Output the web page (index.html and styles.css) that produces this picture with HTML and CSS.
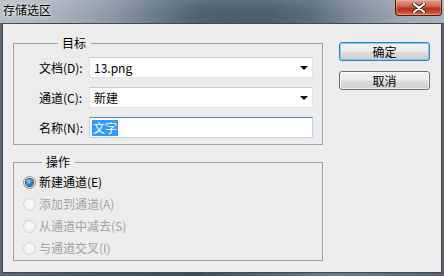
FILE: index.html
```html
<!DOCTYPE html>
<html>
<head>
<meta charset="utf-8">
<link rel="stylesheet" href="styles.css">
</head>
<body>
<div class="window">
  <div class="titlebar">
    <span class="title">存储选区</span>
    <button class="close" aria-label="关闭">
      <svg width="14" height="10" viewBox="0 0 14 10">
        <path d="M2 1 L12 9 M12 1 L2 9" stroke="#4a2420" stroke-width="4" stroke-linecap="round"/>
        <path d="M2 1 L12 9 M12 1 L2 9" stroke="#ffffff" stroke-width="2.2" stroke-linecap="round"/>
      </svg>
    </button>
  </div>
  <div class="client">
    <div class="groups">
      <fieldset class="group target">
        <legend>目标</legend>
        <div class="row">
          <label class="lbl">文档(D):</label>
          <div class="field select"><span>13.png</span><i class="arrow"></i></div>
        </div>
        <div class="row">
          <label class="lbl">通道(C):</label>
          <div class="field select"><span>新建</span><i class="arrow"></i></div>
        </div>
        <div class="row">
          <label class="lbl">名称(N):</label>
          <div class="field text focus"><span class="sel">文字</span></div>
        </div>
      </fieldset>
      <fieldset class="group ops">
        <legend>操作</legend>
        <div class="radio checked"><i class="dot"></i><span>新建通道(E)</span></div>
        <div class="radio disabled"><i class="dot"></i><span>添加到通道(A)</span></div>
        <div class="radio disabled"><i class="dot"></i><span>从通道中减去(S)</span></div>
        <div class="radio disabled"><i class="dot"></i><span>与通道交叉(I)</span></div>
      </fieldset>
    </div>
    <div class="buttons">
      <button class="btn default">确定</button>
      <button class="btn">取消</button>
    </div>
  </div>
</div>
</body>
</html>
```

FILE: styles.css
```css
* { box-sizing: border-box; }
html, body { margin: 0; padding: 0; }
body {
  width: 444px;
  height: 276px;
  overflow: hidden;
  font-family: "Noto Sans CJK SC", "Noto Sans", sans-serif;
  font-size: 12px;
  color: #000;
}
.window {
  width: 444px;
  height: 276px;
  display: flex;
  flex-direction: column;
  background: linear-gradient(90deg, #5d6772 0%, #4a5562 20%, #3f4c5a 45%, #6d7a88 75%, #58636f 100%);
}
.titlebar {
  height: 23px;
  display: flex;
  justify-content: space-between;
  align-items: flex-start;
  background:
    linear-gradient(180deg, rgba(255,255,255,0.10) 0%, rgba(255,255,255,0) 60%),
    linear-gradient(90deg, #b7c0c8 0%, #aab4be 12%, #8c99a6 25%, #6a7a8a 35%, #4e5f70 45%, #4b5c6d 60%, #5a6b7c 70%, #7f8d9b 80%, #9aa6b1 90%, #a9b3bd 100%);
}
.title {
  margin: 2px 0 0 3px;
  line-height: 16px;
  font-size: 12px;
  color: #000;
  text-shadow: 0 0 4px rgba(255,255,255,0.9), 0 0 2px rgba(255,255,255,0.8);
}
.close {
  width: 47px;
  height: 16px;
  margin-right: 2px;
  padding: 0;
  border: 1px solid #4a1a14;
  border-top: none;
  border-radius: 0 0 4px 4px;
  background: linear-gradient(180deg, #e2a08e 0%, #cf6a53 40%, #b8321f 55%, #c8452c 80%, #e07a58 100%);
  box-shadow: inset 0 0 0 1px rgba(255,200,180,0.35);
  display: flex;
  align-items: center;
  justify-content: center;
}
.close svg { display: block; }
.client {
  flex: 1;
  margin: 0 2px 3px 2px;
  border: 1px solid #3e4a56;
  background: #ececec;
  display: flex;
  align-items: flex-start;
}
.groups {
  margin-left: 10px;
  width: 310px;
  display: flex;
  flex-direction: column;
}
.group {
  margin: 0;
  padding: 0;
  border: 1px solid #a3a3a3;
  min-width: 0;
}
.group legend {
  margin-left: 19px;
  padding: 0 5px 0 4px;
  line-height: 16px;
  font-size: 12px;
}
.target {
  margin-top: 11px;
  padding: 6px 9px 6px 25px;
  display: flex;
  flex-direction: column;
  gap: 9px;
}
.row {
  display: flex;
  align-items: center;
  height: 21px;
}
.lbl {
  width: 50px;
  line-height: 16px;
  white-space: nowrap;
}
.field {
  width: 224px;
  height: 21px;
  background: #fff;
  border: 1px solid #e2e3ea;
  border-top-color: #c9cacf;
  display: flex;
  align-items: center;
  padding-left: 4px;
  line-height: 16px;
}
.select { justify-content: space-between; padding-right: 4px; }
.arrow {
  width: 0;
  height: 0;
  border-left: 4px solid transparent;
  border-right: 4px solid transparent;
  border-top: 4px solid #000;
  margin-top: 1px;
}
.focus {
  border-color: #b7d5ee;
  border-top-color: #5c88b0;
  padding-left: 2px;
}
.sel {
  background: #3399ff;
  color: #fff;
  padding: 0 1px;
  line-height: 16px;
}
.ops {
  margin-top: 9px;
  padding: 1px 0 1px 9px;
  display: flex;
  flex-direction: column;
}
.radio {
  height: 22px;
  display: flex;
  align-items: center;
  gap: 3px;
  line-height: 16px;
}
.dot {
  width: 13px;
  height: 13px;
  border-radius: 50%;
  border: 1px solid #8e8f8f;
  background: radial-gradient(circle at 50% 40%, #ffffff 0%, #e8e8e8 60%, #cfcfcf 100%);
  display: flex;
  align-items: center;
  justify-content: center;
}
.checked .dot::after {
  content: "";
  width: 7px;
  height: 7px;
  border-radius: 50%;
  background: radial-gradient(circle at 40% 35%, #9fd6f5 0%, #2d8ccd 45%, #0f4f85 100%);
  box-shadow: 0 0 0 1px #1d4f7a;
}
.disabled { color: #a3a3a3; }
.disabled .dot {
  border-color: #d3d3d3;
  background: radial-gradient(circle at 50% 40%, #fbfbfb 0%, #f0f0f0 70%, #e4e4e4 100%);
}
.buttons {
  margin-left: 16px;
  margin-top: 18px;
  display: flex;
  flex-direction: column;
  gap: 10px;
}
.btn {
  width: 91px;
  height: 19px;
  padding: 0;
  font-family: "Noto Sans CJK SC", "Noto Sans", sans-serif;
  font-size: 12px;
  line-height: 15px;
  color: #000;
  border: 1px solid #707070;
  border-radius: 3px;
  background: linear-gradient(180deg, #f2f2f2 0%, #ebebeb 48%, #dddddd 52%, #cfcfcf 100%);
  box-shadow: inset 0 0 0 1px rgba(255,255,255,0.7);
}
.btn.default {
  border-color: #3c7fb1;
  box-shadow: inset 0 0 0 1px #6fd2f6;
}
```
